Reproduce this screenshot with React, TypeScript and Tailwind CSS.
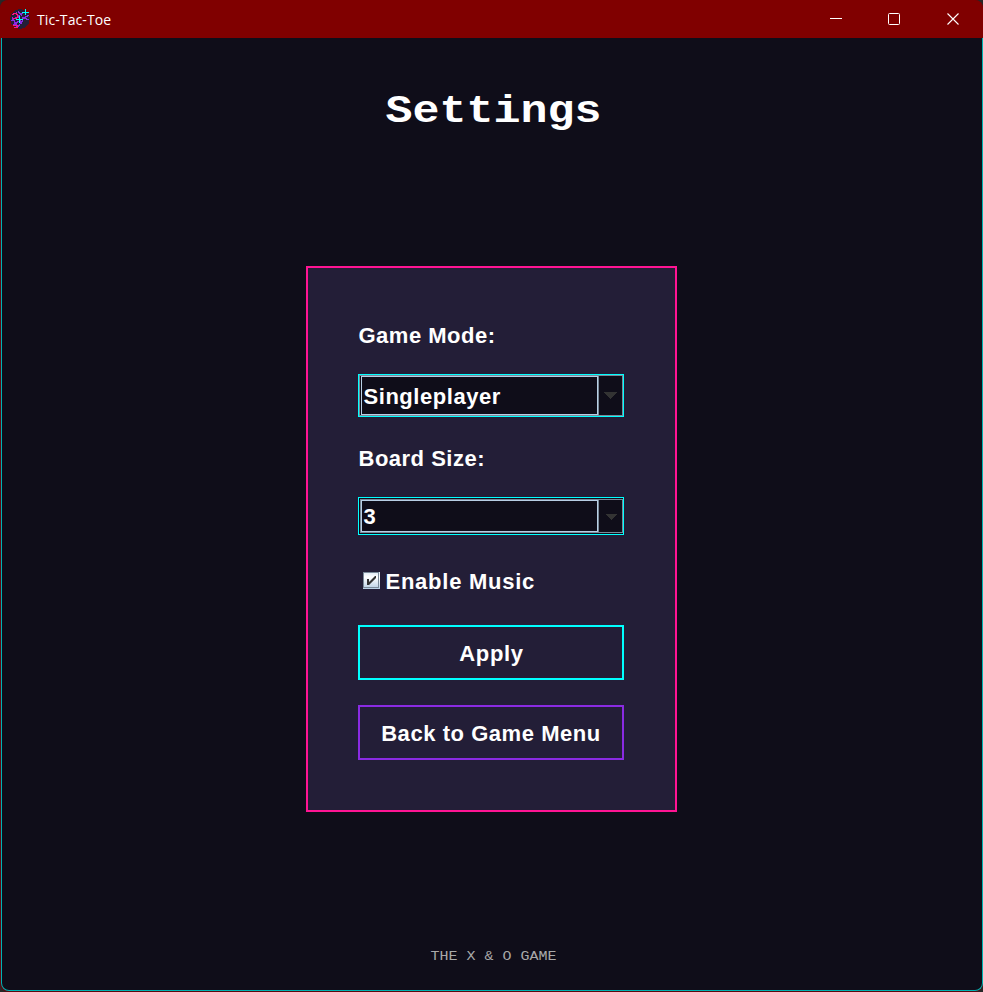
const LABEL = "font-['Liberation_Sans',Arial,sans-serif] text-[22px] leading-[26px] font-bold text-white whitespace-nowrap";

function AppIcon() {
  return (
    <svg width="20" height="20" viewBox="0 0 20 20" className="mr-[7px]" fill="none" shapeRendering="crispEdges">
      <circle cx="10" cy="10" r="9.800" fill="#231e37" />
      <path d="M6 3l6 12M1 12l12-8M3 16L19 6M12 8l7 3M7 19l6-8M2 8l6 11M8 2l4 5" stroke="#8a2be2" strokeWidth="1.2" />
      <path d="M2 5.500h1v-1h3v1h1v3H6v1H3M3 16.500h4v2H4" stroke="#ff1480" />
      <path d="M15.500 0v6M12 3.500h7M9.500 7v7M6 10.500h7" stroke="#00ffff" />
    </svg>
  );
}

function TitleBar() {
  return (
    <header className="flex h-[38px] shrink-0 items-center rounded-t-lg bg-[#800000] pl-[10px] text-white">
      <AppIcon />
      <span className="grow pt-0.5 font-['Open_Sans','Noto_Sans',sans-serif] text-[14px] leading-5 tracking-[0.1px]">Tic-Tac-Toe</span>
      <svg width="153" height="38" viewBox="0 0 153 38" fill="none" stroke="white">
        <path d="M0 18.500h12" />
        <rect x="58.500" y="13.500" width="11" height="11" rx="1" />
        <path d="M117.500 13.500l11 11M128.500 13.500l-11 11" strokeWidth="1.1" />
      </svg>
    </header>
  );
}

function GameModeSelect() {
  return (
    <button className="mt-[25px] flex h-[43px] w-[266px] border border-[#00ffff] bg-[#0f0d19]">
      <span className="flex h-full w-full border border-[#7a8a99] pl-px">
        <span className="flex h-full w-[237px] items-center border border-[#b8cfe5] pl-0.5 pt-0.5">
          <span className={`tracking-[0.55px] ${LABEL}`}>Singleplayer</span>
        </span>
        <span className="flex h-full grow items-center justify-center border-l border-[#7a8a99]">
          <svg width="13" height="7" viewBox="0 0 13 7" shapeRendering="crispEdges"><path d="M0 0h13L6.500 7z" fill="#333" /></svg>
        </span>
      </span>
    </button>
  );
}

function BoardSizeSelect() {
  return (
    <button className="mt-[25px] flex h-[38px] w-[266px] border border-[#00ffff] bg-[#0f0d19] py-px pl-px">
      <span className="flex h-full w-full border border-[#7a8a99]">
        <span className="flex h-full w-[237px] items-center border border-[#b8cfe5] pl-0.5 pt-px">
          <span className={LABEL}>3</span>
        </span>
        <span className="flex h-full grow items-center justify-center border-l border-[#7a8a99] pt-0.5 pl-px">
          <svg width="12" height="6" viewBox="0 0 12 6" shapeRendering="crispEdges"><path d="M0 0h12L6 6z" fill="#333" /></svg>
        </span>
      </span>
    </button>
  );
}

export default function App() {
  return (
    <div className="h-[992px] w-[983px] overflow-hidden bg-[#272727]">
      <div className="flex h-full flex-col rounded-lg bg-[#5c0810]">
        <TitleBar />
        <main className="mb-px ml-px flex grow flex-col items-center rounded-b-lg border-x border-b border-[#00b3b3] bg-[#0f0d19]">
          <h1 className="mt-[48px] origin-center scale-y-[0.87] pl-[3px] font-['Liberation_Mono','Courier_New',monospace] text-[45px] leading-[52px] font-bold text-white">Settings</h1>
          <section className="mt-[128px] mr-[2px] flex h-[546px] w-[371px] flex-col items-start border-2 border-[#ff1493] bg-[#231e37] pl-[50px] pt-[55px]">
            <div className={`ml-px tracking-[0.5px] ${LABEL}`}>Game Mode:</div>
            <GameModeSelect />
            <div className={`mt-[29px] ml-px tracking-[0.5px] ${LABEL}`}>Board Size:</div>
            <BoardSizeSelect />
            <label className="mt-[33px] flex items-center">
              <svg width="17" height="17" viewBox="0 0 17 17" className="mr-[6px] mb-0.5 ml-[5px]">
                <defs>
                  <linearGradient id="box" x1="0" y1="0" x2="0" y2="1">
                    <stop offset="0" stopColor="#dde8f3" />
                    <stop offset="0.3" stopColor="#ffffff" />
                    <stop offset="1" stopColor="#b8cfe5" />
                  </linearGradient>
                </defs>
                <rect width="17" height="17" fill="url(#box)" />
                <rect x="0.500" y="0.500" width="15" height="15" stroke="#7a8a99" fill="none" />
                <path d="M4 7h2v3l6-6h1v2l-7 7H4z" fill="#333" />
              </svg>
              <span className={`pt-px tracking-[0.75px] ${LABEL}`}>Enable Music</span>
            </label>
            <button className={`mt-[30px] h-[55px] w-[266px] border-2 border-[#00ffff] pt-0.5 pl-0.5 tracking-[0.7px] ${LABEL}`}>Apply</button>
            <button className={`mt-[25px] h-[55px] w-[266px] border-2 border-[#8a2be2] pt-0.5 pl-px tracking-[0.55px] ${LABEL}`}>Back to Game Menu</button>
          </section>
          <footer className="mt-[137px] origin-center scale-y-[0.87] pl-[3px] font-['Liberation_Mono','Courier_New',monospace] text-[15px] leading-4 text-[#a9a9a9]">THE X &amp; O GAME</footer>
        </main>
      </div>
    </div>
  );
}
